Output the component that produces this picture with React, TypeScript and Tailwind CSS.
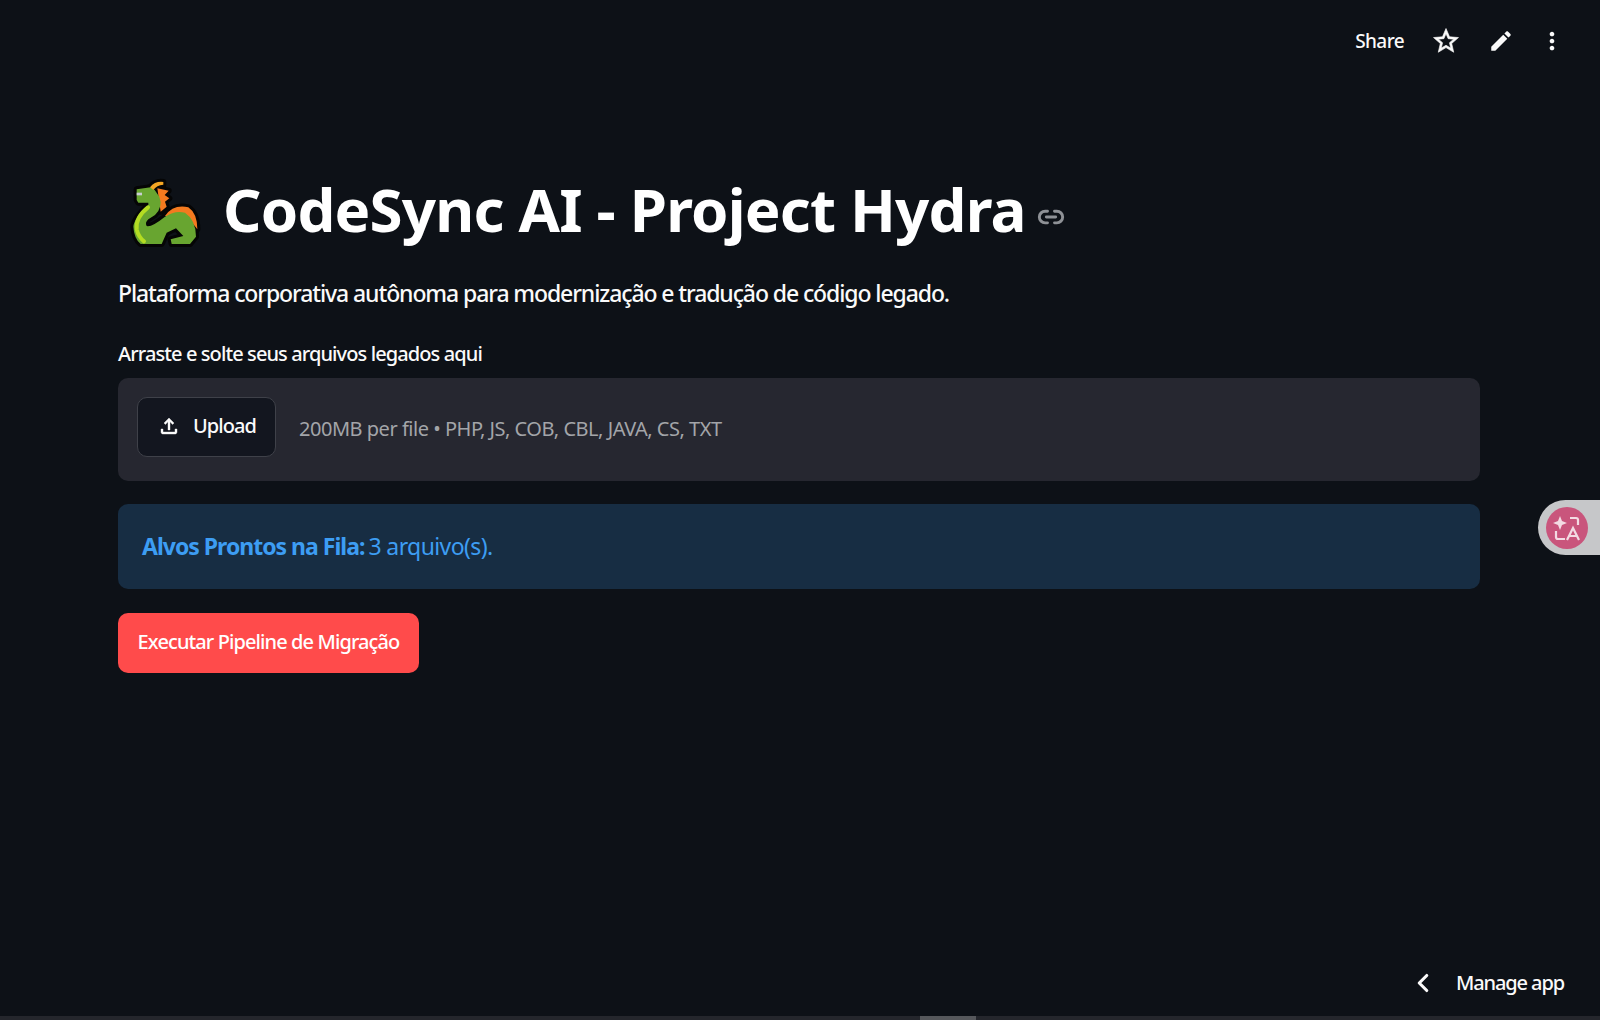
import { ChevronLeft, Link2 } from "lucide-react"

const font = "font-['Noto_Sans',sans-serif]"

function Dragon() {
  const body =
    "M50 58 L92 52 L104 60 L118 80 Q130 110 105 135 L85 148 Q74 158 80 168 Q95 172 135 140 Q165 120 195 128 Q228 150 228 200 L210 222 L155 222 L152 208 L190 198 L168 175 L140 188 L125 222 L62 222 Q42 205 40 170 Q42 145 85 105 L85 98 L55 98 L50 90 Z"
  const neckFin = "M112 55 L146 62 L134 75 L148 85 L135 95 L140 110 L122 125 Z"
  const backFin = "M135 138 Q160 102 205 112 Q232 130 232 178 Q205 135 135 138 Z"
  const horn = "M90 52 Q105 33 130 36 L130 44 Q110 45 100 60 Z"
  return (
    <svg width="90" height="80" viewBox="0 0 270 240" className="shrink-0">
      <g stroke="#050505" strokeWidth="18" strokeLinejoin="round">
        <path d={body} />
        <path d={horn} />
        <path d={neckFin} />
        <path d={backFin} />
      </g>
      <path fill="#f47a1f" d={neckFin} />
      <path fill="#f47a1f" d={backFin} />
      <path fill="#68a530" d={body} />
      <path fill="none" stroke="#b4dc22" strokeWidth="12" strokeLinecap="round" d="M84 112 Q46 142 50 178 Q55 200 72 214" />
      <path fill="#f5a623" d={horn} />
      <path fill="#c9ced3" d="M50 68 H66 V76 H50 Z" />
    </svg>
  )
}

function Icon({ d, size = 24, bold = 0 }: { d: string; size?: number; bold?: number }) {
  return (
    <svg width={size} height={size} viewBox="0 0 24 24" fill="currentColor" stroke="currentColor" strokeWidth={bold}>
      <path fillRule="evenodd" d={d} />
    </svg>
  )
}

export default function App() {
  return (
    <div className={`relative flex min-h-[1020px] flex-col overflow-hidden bg-[#0d1117] text-[#fafafa] ${font}`}>
      {/* top toolbar */}
      <header className="flex h-[82px] items-center justify-end pr-[34px]">
        <span className="mr-[27px] text-[19px] font-medium tracking-[-0.6px]">Share</span>
        <span className="mr-[27px]">
          <Icon size={30} bold={0.5} d="M22 9.24l-7.19-.62L12 2 9.19 8.63 2 9.24l5.46 4.73L5.82 21 12 17.27 18.18 21l-1.63-7.03L22 9.24zM12 15.4l-3.76 2.27 1-4.28-3.32-2.88 4.38-.38L12 6.1l1.71 4.04 4.38.38-3.32 2.88 1 4.28L12 15.4z" />
        </span>
        <span className="mr-[24px]">
          <Icon size={26} d="M3 17.25V21h3.75L17.81 9.94l-3.75-3.75L3 17.25zM20.71 7.04c.39-.39.39-1.02 0-1.41l-2.34-2.34c-.39-.39-1.02-.39-1.41 0l-1.83 1.83 3.75 3.75 1.83-1.83z" />
        </span>
        <Icon size={28} d="M12 8c1.1 0 2-.9 2-2s-.9-2-2-2-2 .9-2 2 .9 2 2 2zm0 2c-1.1 0-2 .9-2 2s.9 2 2 2 2-.9 2-2-.9-2-2-2zm0 6c-1.1 0-2 .9-2 2s.9 2 2 2 2-.9 2-2-.9-2-2-2z" />
      </header>

      <main className="flex flex-1 flex-col pl-[118px] pr-[120px]">
        <div className="mt-[88px] flex h-[80px] items-center">
          <div className="ml-[2px] mr-[13px]"><Dragon /></div>
          <h1 className="mb-[2px] text-[60px] font-bold tracking-[-0.8px] text-white">CodeSync AI - Project Hydra</h1>
          <Link2 className="ml-[11px] mt-[14px] h-[28px] w-[28px] text-[#8e9196]" strokeWidth={2.5} />
        </div>

        <p className="mt-[26px] text-[23px] leading-[34px] font-medium tracking-[-1.1px]">
          Plataforma corporativa autônoma para modernização e tradução de código legado.
        </p>

        <label className="mt-[30px] text-[20px] leading-[28px] font-medium tracking-[-0.9px]">
          Arraste e solte seus arquivos legados aqui
        </label>

        <section className="mt-[10px] flex h-[103px] items-center rounded-[10px] bg-[#262730] px-[19px]">
          <button className="mb-[6px] flex h-[60px] w-[139px] items-center justify-center gap-[12px] rounded-[10px] border border-[#3f4149] bg-[#13161f] pb-[2px]">
            <Icon size={24} bold={0.4} d="M11 16V7.85l-2.6 2.6L7 9l5-5 5 5-1.4 1.45-2.6-2.6V16h-2zm-5 4c-.55 0-1.02-.2-1.41-.59A1.93 1.93 0 0 1 4 18v-3h2v3h12v-3h2v3c0 .55-.2 1.02-.59 1.41-.39.39-.86.59-1.41.59H6z" />
            <span className="text-[20px] font-medium tracking-[-0.9px]">Upload</span>
          </button>
          <span className="mb-[2px] ml-[23px] text-[20px] tracking-[-0.48px] text-[#a3a5a9]">200MB per file • PHP, JS, COB, CBL, JAVA, CS, TXT</span>
        </section>

        <section className="mt-[23px] flex h-[85px] items-center rounded-[10px] bg-[#172d43] px-[24px] text-[23px] text-[#3d9df3]">
          <b className="font-bold tracking-[-1px]">Alvos Prontos na Fila:</b>
          <span className="ml-[4px] tracking-[-0.6px]">3 arquivo(s).</span>
        </section>

        <button className="mt-[24px] h-[60px] w-[301px] rounded-[10px] bg-[#ff4b4b] pb-[2px] text-[20px] font-medium tracking-[-0.9px] text-white">
          Executar Pipeline de Migração
        </button>
      </main>

      {/* manage app */}
      <footer className="flex h-[50px] items-center justify-end pt-[4px] pr-[36px]">
        <ChevronLeft className="mr-[18px] h-[30px] w-[30px]" strokeWidth={2.5} />
        <span className="text-[20px] font-medium tracking-[-1.1px]">Manage app</span>
      </footer>
      <div className="mt-[10px] flex h-[4px] bg-[#24262c] pl-[920px]">
        <div className="h-full w-[56px] bg-[#56585c]" />
      </div>

      {/* translate widget */}
      <div className="absolute top-[500px] right-0 flex h-[55px] w-[62px] items-center rounded-l-full bg-[#c6c7c9] pl-[8px]">
        <div className="flex h-[42px] w-[42px] items-center justify-center rounded-full bg-[#c9557c]">
          <svg width="30" height="30" viewBox="0 0 30 30" fill="none" stroke="#f3dbe3" strokeWidth="2.2">
            <path fill="#f3dbe3" stroke="none" d="M8 3 L10 8 L15 10 L10 12 L8 17 L6 12 L1 10 L6 8 Z" />
            <path d="M18 5 H24 Q26 5 26 7 V12" />
            <path d="M4 18 V24 Q4 26 6 26 H13" />
            <path d="M15 27 L21 15 L27 27 M17.5 23 H24.5" />
          </svg>
        </div>
      </div>
    </div>
  )
}
